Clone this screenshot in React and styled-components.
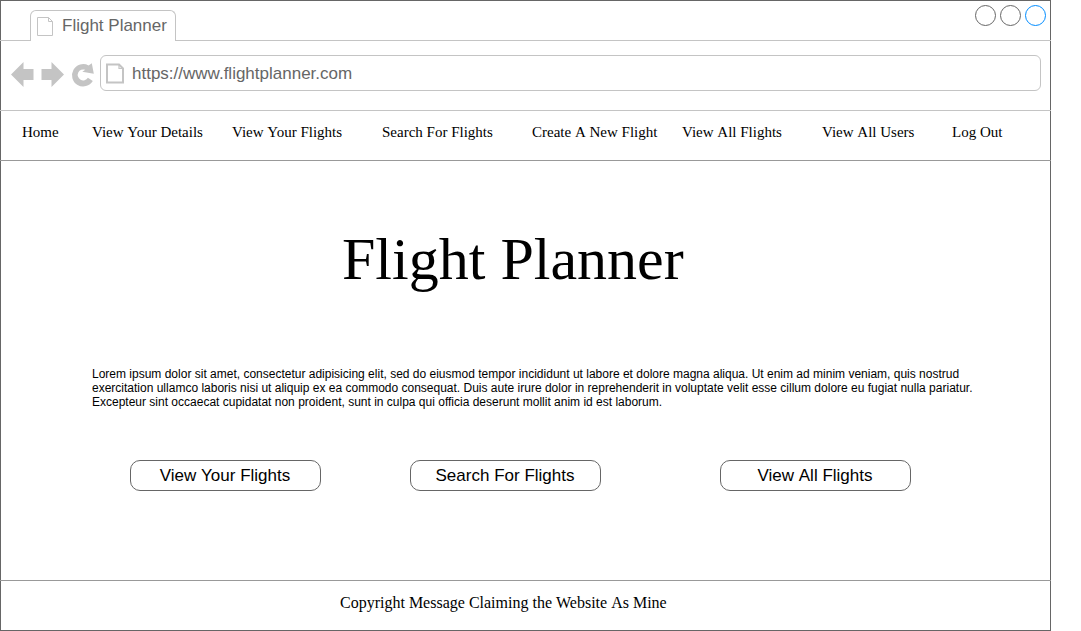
import React, { Fragment } from "react";
import styled, { createGlobalStyle } from "styled-components";

const GlobalStyle = createGlobalStyle`
  * { box-sizing: border-box; }
  body {
    margin: 0;
    background: #fff;
    color: #000;
    font-family: "Liberation Sans", Arial, sans-serif;
    overflow: hidden;
  }
`;

const BrowserWindow = styled.div`
  display: flex;
  flex-direction: column;
  width: 1051px;
  height: 631px;
  border: 1px solid #666;
  background: #fff;
`;

const TitleBar = styled.header`
  display: flex;
  justify-content: space-between;
  height: 40px;
  margin: 0 -1px;
  padding: 0 5px 0 30px;
  border-bottom: 1px solid #c4c4c4;
`;

const Tab = styled.div`
  display: flex;
  gap: 9px;
  width: 146px;
  height: 31px;
  margin-top: 9px;
  padding: 6px 0 0 6px;
  border: 1px solid #c4c4c4;
  border-bottom: 0;
  border-radius: 6px 6px 0 0;
  background: #fff;
  color: #666;
  font-size: 17px;
  line-height: 17px;
  white-space: nowrap;
`;

const TabTitle = styled.span`
  line-height: 19px;
  margin-top: -1px;
`;

const WindowControls = styled.div`
  display: flex;
  gap: 4px;
  padding-top: 4px;
`;

const Control = styled.span`
  width: 21px;
  height: 21px;
  border: 1px solid ${(p) => p.$color};
  border-radius: 50%;
`;

const Toolbar = styled.div`
  display: flex;
  height: 70px;
  margin: 0 -1px;
  padding: 14px 10px 0 10px;
  border-bottom: 1px solid #c4c4c4;
`;

const NavIcons = styled.svg`
  flex: none;
  width: 90px;
  height: 36px;
  fill: #c4c4c4;
`;

const AddressBar = styled.div`
  display: flex;
  flex: 1;
  align-items: center;
  gap: 7px;
  height: 36px;
  padding-left: 5px;
  border: 1px solid #c4c4c4;
  border-radius: 6px;
  color: #666;
  font-size: 17px;
`;

const Url = styled.span`
  padding-top: 2px;
`;

const PageIcon = styled.svg`
  flex: none;
  fill: none;
  stroke: #c4c4c4;
`;

const SiteNav = styled.nav`
  display: grid;
  grid-template-columns: 70px 140px 150px 150px 150px 140px 130px auto;
  height: 50px;
  margin: 0 -1px;
  padding: 12px 0 0 22px;
  border-bottom: 1px solid #999;
  font-family: "Liberation Serif", "Times New Roman", serif;
  font-size: 15px;
  line-height: 18px;
  white-space: nowrap;
`;

const NavLink = styled.a`
  color: #000;
`;

const Main = styled.main`
  height: 420px;
  margin: 0 -1px;
  border-bottom: 1px solid #999;
`;

const Heading = styled.h1`
  margin: 63px 0 0 342px;
  font: 400 60px/70px "Liberation Serif", "Times New Roman", serif;
  white-space: nowrap;
`;

const Intro = styled.p`
  width: 890px;
  margin: 73px 0 0 92px;
  font-size: 12px;
  line-height: 14px;
`;

const Actions = styled.div`
  display: flex;
  margin: 51px 0 0 130px;
`;

const ActionButton = styled.button`
  width: 191px;
  height: 31px;
  margin-right: ${(p) => p.$gap || 0}px;
  padding: 0 1px 0 0;
  border: 1px solid #666;
  border-radius: 10px;
  background: #fff;
  color: #000;
  font: 17px/19px "Liberation Sans", Arial, sans-serif;
`;

const Footer = styled.footer`
  padding: 13px 0 0 339px;
  font-family: "Liberation Serif", "Times New Roman", serif;
  font-size: 16px;
  line-height: 18px;
`;

const Space = styled.span`
  font-kerning: none;
`;

// Keeps every word space at its full width, also next to "A" and "Y".
function Words({ text }) {
  return text.split(" ").map((word, i) => (
    <Fragment key={i}>
      {i > 0 && <Space> </Space>}
      {word}
    </Fragment>
  ));
}

const links = [
  "Home",
  "View Your Details",
  "View Your Flights",
  "Search For Flights",
  "Create A New Flight",
  "View All Flights",
  "View All Users",
  "Log Out",
];

const actions = [
  { label: "View Your Flights", gap: 89 },
  { label: "Search For Flights", gap: 119 },
  { label: "View All Flights" },
];

export default function App() {
  return (
    <>
      <GlobalStyle />
      <BrowserWindow>
        <TitleBar>
          <Tab>
            <PageIcon width="16" height="19" viewBox="0 0 16 19">
              <path d="M.5 .5H11.5L15.5 4.5V18.5H.5ZM11.5 .5V4.5H15.5" />
            </PageIcon>
            <TabTitle>Flight Planner</TabTitle>
          </Tab>
          <WindowControls>
            <Control $color="#666" />
            <Control $color="#666" />
            <Control $color="#008cff" />
          </WindowControls>
        </TitleBar>
        <Toolbar>
          <NavIcons viewBox="0 0 90 36">
            <path d="M1 19.5L13.5 7V14H23.5V25H13.5V32Z" />
            <path d="M54 19.5L41.5 7V14H31.5V25H41.5V32Z" />
            <path d="M81.8 8.3L83.8 18.8L72.3 16.7L75.3 14.8A5.5 5.5 0 1 0 77.9 22.8L82.8 26A11.2 11.2 0 1 1 78.6 10.4Z" />
          </NavIcons>
          <AddressBar>
            <PageIcon width="19" height="21" viewBox="0 0 19 21" strokeWidth="2">
              <path d="M1 1.5H13L17 5.5V19.5H1Z" />
              <path d="M13 1V5.5H17.5" strokeWidth="1.2" />
            </PageIcon>
            <Url>https://www.flightplanner.com</Url>
          </AddressBar>
        </Toolbar>
        <SiteNav>
          {links.map((label) => (
            <NavLink key={label}>
              <Words text={label} />
            </NavLink>
          ))}
        </SiteNav>
        <Main>
          <Heading>Flight Planner</Heading>
          <Intro>
            Lorem ipsum dolor sit amet, consectetur adipisicing elit, sed do eiusmod tempor
            incididunt ut labore et dolore magna aliqua. Ut enim ad minim veniam, quis nostrud
            exercitation ullamco laboris nisi ut aliquip ex ea commodo consequat. Duis aute irure
            dolor in reprehenderit in voluptate velit esse cillum dolore eu fugiat nulla pariatur.
            Excepteur sint occaecat cupidatat non proident, sunt in culpa qui officia deserunt
            mollit anim id est laborum.
          </Intro>
          <Actions>
            {actions.map(({ label, gap }) => (
              <ActionButton key={label} $gap={gap}>
                <Words text={label} />
              </ActionButton>
            ))}
          </Actions>
        </Main>
        <Footer>
          <Words text="Copyright Message Claiming the Website As Mine" />
        </Footer>
      </BrowserWindow>
    </>
  );
}
